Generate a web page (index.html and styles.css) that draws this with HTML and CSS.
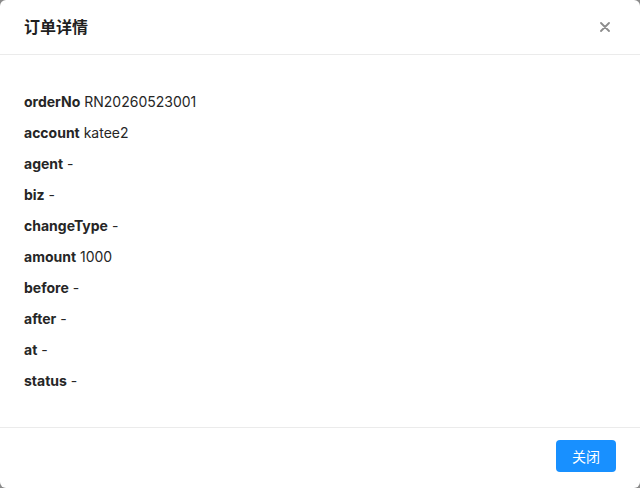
FILE: index.html
```html
<!DOCTYPE html>
<html lang="zh">
<head>
<meta charset="utf-8">
<title>订单详情</title>
<link rel="stylesheet" href="styles.css">
</head>
<body>
<div class="modal">
  <div class="modal-header">
    <div class="modal-title">订单详情</div>
    <button class="modal-close" aria-label="close">
      <svg width="10" height="10" viewBox="0 0 10 10"><path d="M1 1L9 9M9 1L1 9" stroke="#8c8c8c" stroke-width="1.8" stroke-linecap="round"/></svg>
    </button>
  </div>
  <div class="modal-body">
    <div class="row"><b>orderNo</b> RN20260523001</div>
    <div class="row"><b>account</b> katee2</div>
    <div class="row"><b>agent</b> -</div>
    <div class="row"><b>biz</b> -</div>
    <div class="row"><b>changeType</b> -</div>
    <div class="row"><b>amount</b> 1000</div>
    <div class="row"><b>before</b> -</div>
    <div class="row"><b>after</b> -</div>
    <div class="row"><b>at</b> -</div>
    <div class="row"><b>status</b> -</div>
  </div>
  <div class="modal-footer">
    <button class="btn-primary">关闭</button>
  </div>
</div>
</body>
</html>
```
FILE: styles.css
```css
html, body {
  margin: 0;
  padding: 0;
  width: 640px;
  height: 488px;
  background: #8a8a8a;
  overflow: hidden;
}
.modal {
  width: 640px;
  height: 488px;
  background: #fff;
  border-radius: 6px;
  display: flex;
  flex-direction: column;
  font-family: Inter, "Noto Sans CJK SC", sans-serif;
  color: #262626;
  box-sizing: border-box;
}
.modal-header {
  height: 54px;
  border-bottom: 1px solid #ebebeb;
  display: flex;
  align-items: center;
  justify-content: space-between;
  padding: 0 30px 0 24px;
  box-sizing: content-box;
}
.modal-title {
  font-size: 16px;
  font-weight: 600;
  color: #1f1f1f;
  line-height: 22px;
}
.modal-close {
  border: 0;
  background: none;
  padding: 0;
  width: 10px;
  height: 10px;
  display: flex;
  cursor: pointer;
}
.modal-body {
  flex: 1;
  padding: 36px 24px 0;
  display: flex;
  flex-direction: column;
  gap: 9px;
}
.row {
  font-size: 14px;
  line-height: 22px;
  color: #262626;
}
.row b {
  font-weight: 700;
}
.modal-footer {
  border-top: 1px solid #ebebeb;
  height: 61px;
  padding: 12px 24px 0;
  display: flex;
  justify-content: flex-end;
  align-items: flex-start;
  box-sizing: border-box;
}
.btn-primary {
  width: 60px;
  height: 32px;
  border: 0;
  border-radius: 4px;
  background: #1890ff;
  color: #fff;
  font-family: Inter, "Noto Sans CJK SC", sans-serif;
  font-size: 14px;
  padding: 0;
  cursor: pointer;
}
```
